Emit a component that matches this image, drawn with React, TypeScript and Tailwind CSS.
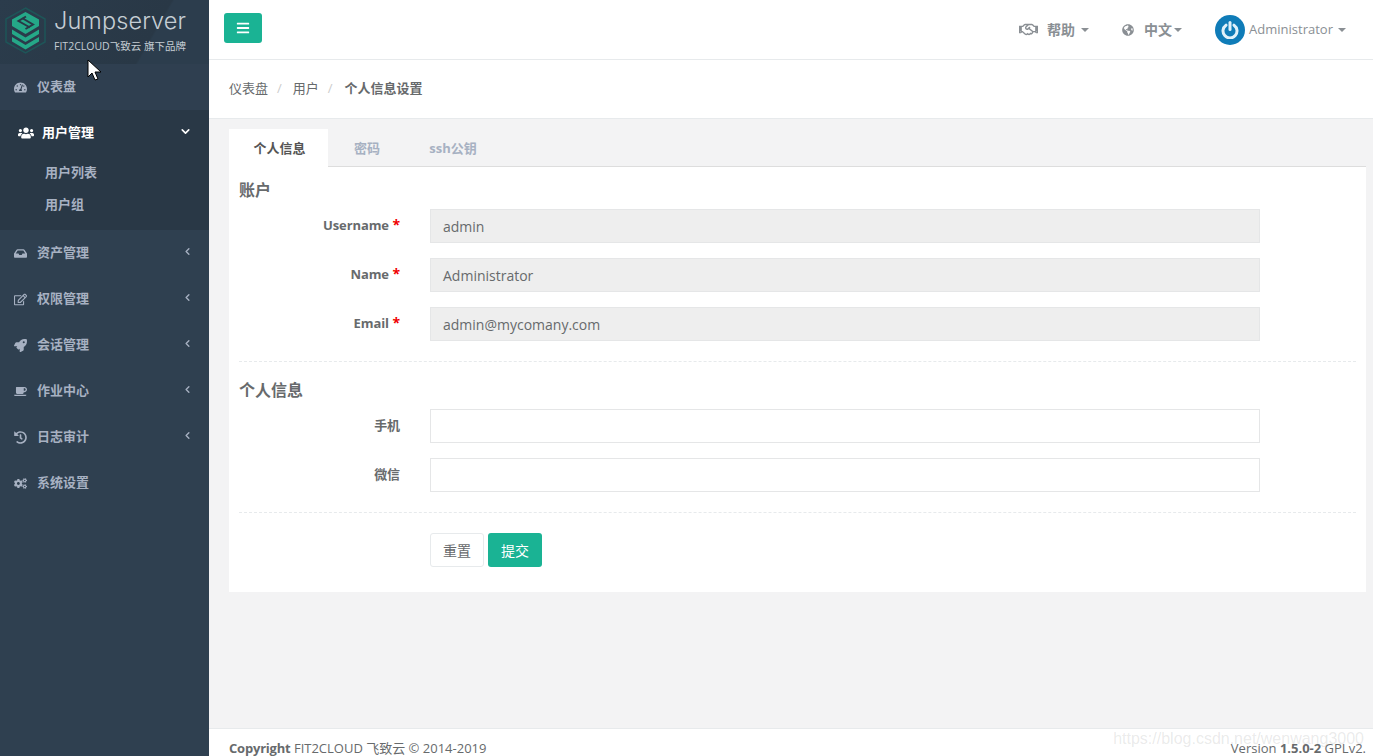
import {
  FaBars,
  FaCogs,
  FaCoffee,
  FaGlobeAmericas,
  FaHistory,
  FaInbox,
  FaRegEdit,
  FaRegHandshake,
  FaRocket,
  FaTachometerAlt,
  FaUsers,
} from "react-icons/fa";
import { FiChevronDown, FiChevronLeft } from "react-icons/fi";

const font = "font-['Open_Sans','Noto_Sans_CJK_SC',sans-serif]";

const menu = [
  { label: "资产管理", icon: FaInbox, arrow: true },
  { label: "权限管理", icon: FaRegEdit, arrow: true },
  { label: "会话管理", icon: FaRocket, arrow: true },
  { label: "作业中心", icon: FaCoffee, arrow: true },
  { label: "日志审计", icon: FaHistory, arrow: true },
  { label: "系统设置", icon: FaCogs, arrow: false },
];

const accountFields = [
  { label: "Username", value: "admin" },
  { label: "Name", value: "Administrator" },
  { label: "Email", value: "admin@mycomany.com" },
];

function Caret() {
  return <span className="inline-block border-x-[4px] border-t-[4px] border-x-transparent border-t-[#8a8f94]" />;
}

function Logo() {
  return (
    <svg width="41" height="47" viewBox="0 0 41 47" className="shrink-0">
      <path d="M20.5 1 40 12v23L20.5 46 1 35V12z" fill="none" stroke="#1e5558" strokeWidth="1.5" />
      <path d="M20.5 5 34 12.5v6.5L20.5 27 7 19v-6.500z" fill="#25a888" />
      <path d="M21 9.500 13.500 14 25 20.500M20.500 22 28 17.500 17 11" fill="none" stroke="#293846" strokeWidth="2" />
      <path d="M7 22.500l13.500 8 13.500-8v4.500l-13.500 8-13.500-8z" fill="#25a888" />
      <path d="M7 30l13.500 8 13.500-8v4.500l-13.500 8-13.500-8z" fill="#25a888" />
    </svg>
  );
}

function Field({ label, value, required }: { label: string; value?: string; required?: boolean }) {
  return (
    <div className="mb-[15px] flex h-[34px] items-start">
      <label className="mr-[30px] w-[161px] pt-[7px] text-right text-[13px] font-bold leading-[18px] tracking-[-0.1px] text-[#676a6c]">
        {label}
        {required && <span className="text-[14px] text-[#f00000]"> *</span>}
      </label>
      <div
        className={`flex h-[34px] w-[830px] items-center border border-[#e5e6e7] px-[12px] text-[14px] text-[#676a6c] ${
          value ? "bg-[#eeeeee]" : "bg-white"
        }`}
      >
        {value}
      </div>
    </div>
  );
}

export default function App() {
  return (
    <div className={`relative flex h-[756px] w-[1373px] overflow-hidden bg-[#f3f3f4] ${font}`}>
      {/* Sidebar */}
      <aside className="h-full w-[209px] shrink-0 bg-[#2f4050] text-[13px] font-semibold text-[#a7b1c2]">
        <div className="flex h-[64px] items-start gap-[8px] bg-[linear-gradient(120deg,#2b3c4c_0%,#293846_70%,#2c3d4d_71%)] pl-[5px] pt-[7px]">
          <Logo />
          <div className="text-[#c5cdd4]">
            <div className="font-['Inter',sans-serif] text-[23.500px] font-light leading-[28px] tracking-[0.1px]">Jumpserver</div>
            <div className="mt-[5px] text-[10.500px] font-normal leading-[13px]">FIT2CLOUD飞致云 旗下品牌</div>
          </div>
        </div>

        <div className="flex h-[46px] items-center bg-[#2f3f50] pl-[14px]">
          <FaTachometerAlt className="mr-[10px] size-[13px]" />
          仪表盘
        </div>

        <div className="h-[120px] border-l-[4px] border-[#293846] bg-[#293846]">
          <div className="flex h-[46px] items-center pl-[14px] pr-[17px] text-white">
            <FaUsers className="mr-[8px] size-[16px]" />
            用户管理
            <FiChevronDown className="mb-[4px] ml-auto size-[13px]" strokeWidth={3} />
          </div>
          <div className="flex h-[32px] items-center pl-[41px] pt-[2px]">用户列表</div>
          <div className="flex h-[32px] items-center pl-[41px] pt-[2px]">用户组</div>
        </div>

        {menu.map(({ label, icon: Icon, arrow }) => (
          <div key={label} className="flex h-[46px] items-center pl-[14px] pr-[16px]">
            <Icon className="mr-[10px] size-[13px]" />
            {label}
            {arrow && <FiChevronLeft className="mb-[3px] ml-auto size-[11px]" strokeWidth={3} />}
          </div>
        ))}
      </aside>

      {/* Main */}
      <main className="flex h-[784px] min-w-0 flex-1 flex-col">
        <header className="flex h-[60px] shrink-0 items-center border-b border-[#e7eaec] bg-white pl-[15px] pr-[27px] text-[14px] text-[#8a8f94]">
          <button className="mb-[3px] flex h-[30px] w-[38px] items-center justify-center rounded-[3px] bg-[#1ab394] text-white">
            <FaBars className="size-[14px]" />
          </button>
          <div className="ml-auto flex items-center font-semibold">
            <FaRegHandshake className="mr-[9px] size-[19px]" />
            帮助
            <span className="ml-[6px] flex">
              <Caret />
            </span>
            <FaGlobeAmericas className="ml-[33px] mr-[10px] size-[12px]" />
            中文
            <span className="ml-[2px] flex">
              <Caret />
            </span>
            <span className="ml-[33px] mr-[4px] flex size-[30px] items-center justify-center rounded-full bg-[#0f7cb8]">
              <svg width="18" height="18" viewBox="0 0 18 18" fill="none" stroke="#dff1fa" strokeWidth="3">
                <path d="M5 4.200a7 7 0 1 0 8 0" strokeLinecap="round" />
                <path d="M9 1.500v7" strokeLinecap="round" />
              </svg>
            </span>
            <span className="text-[13px] font-normal">Administrator</span>
            <span className="ml-[5px] flex">
              <Caret />
            </span>
          </div>
        </header>

        <div className="flex h-[59px] shrink-0 items-center gap-[9px] border-b border-[#e7eaec] bg-white pb-px pl-[20px] text-[13px] text-[#676a6c]">
          <span>仪表盘</span>
          <span className="text-[#cccccc]">/</span>
          <span className="ml-[2px]">用户</span>
          <span className="text-[#cccccc]">/</span>
          <span className="ml-[3px] font-bold">个人信息设置</span>
        </div>

        <div className="min-h-0 flex-1 pl-[20px] pr-[7px] pt-[10px]">
          <div className="flex h-[38px] border-b border-[#dddddd] text-[13px] font-bold text-[#a7b1c2]">
            <div className="flex h-[38px] w-[99px] items-center justify-center bg-white pl-[2px] pt-[2px] text-[#555555]">个人信息</div>
            <div className="flex w-[78px] items-center justify-center pt-[2px]">密码</div>
            <div className="flex w-[94px] items-center justify-center pt-[2px]">ssh公钥</div>
          </div>

          <form className="h-[425px] bg-white px-[10px] pt-[13px] text-[#676a6c]">
            <h3 className="mb-[9px] text-[16px] font-semibold leading-[20px]">账户</h3>
            {accountFields.map((f) => (
              <Field key={f.label} label={f.label} value={f.value} required />
            ))}
            <div className="mb-[18px] mt-[20px] border-t border-dashed border-[#e7eaec]" />
            <h3 className="mb-[9px] text-[16px] font-semibold leading-[20px]">个人信息</h3>
            <Field label="手机" />
            <Field label="微信" />
            <div className="mb-[20px] mt-[20px] border-t border-dashed border-[#e7eaec]" />
            <div className="ml-[191px] flex gap-[4px] text-[14px]">
              <button type="button" className="h-[34px] w-[54px] rounded-[3px] border border-[#e7eaec] bg-white text-[#676a6c]">
                重置
              </button>
              <button type="button" className="h-[34px] w-[54px] rounded-[3px] bg-[#1ab394] text-white">
                提交
              </button>
            </div>
          </form>
        </div>

        <footer className="flex h-[56px] shrink-0 justify-between border-t border-[#e7eaec] bg-white pl-[20px] pr-[7px] pt-[10px] text-[13px] leading-[18px] text-[#676a6c]">
          <div>
            <strong className="tracking-[-0.2px]">Copyright</strong> FIT2CLOUD 飞致云 © 2014-2019
          </div>
          <div>
            Version <strong>1.5.0-2</strong> GPLv2.
          </div>
        </footer>
      </main>

      {/* Cursor from the capture */}
      <svg width="16" height="23" viewBox="0 0 16 23" className="absolute left-[87px] top-[59px]">
        <path d="M1 1v17l4-4 3 7 3-1-3-7h6z" fill="#fff" stroke="#000" strokeWidth="1" />
      </svg>

      {/* Blog watermark */}
      <div className="absolute right-[9px] top-[728px] font-['Liberation_Sans',sans-serif] text-[16px] leading-[22px] text-[#676a6c]/15">
        https://blog.csdn.net/wenwang3000
      </div>
    </div>
  );
}
